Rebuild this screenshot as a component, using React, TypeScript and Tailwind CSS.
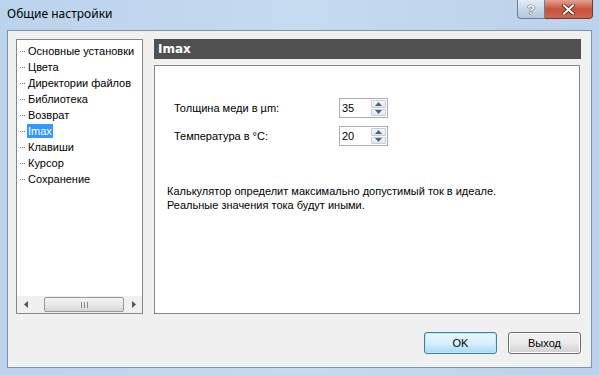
import { useState } from 'react'

const items = [
  'Основные установки',
  'Цвета',
  'Директории файлов',
  'Библиотека',
  'Возврат',
  'Imax',
  'Клавиши',
  'Курсор',
  'Сохранение',
]

function Spin({ value }: { value: string }) {
  return (
    <div className="flex h-[20px] w-[49px] items-stretch border border-[#abadb3] bg-white">
      <div className="flex-1 pl-[2px] text-[11px] leading-[18px] text-black">{value}</div>
      <div className="flex w-[16px] flex-col gap-[1px] py-[1px] pr-[1px]">
        <div className="flex flex-1 items-center justify-center rounded-[1px] border border-[#c5cfdc] bg-gradient-to-b from-[#f6f9fd] to-[#dde6f1]">
          <svg width="7" height="4" viewBox="0 0 7 4">
            <path d="M0 4 L3.5 0 L7 4 Z" fill="#4d6185" />
          </svg>
        </div>
        <div className="flex flex-1 items-center justify-center rounded-[1px] border border-[#c5cfdc] bg-gradient-to-b from-[#f6f9fd] to-[#dde6f1]">
          <svg width="7" height="4" viewBox="0 0 7 4">
            <path d="M0 0 L7 0 L3.5 4 Z" fill="#4d6185" />
          </svg>
        </div>
      </div>
    </div>
  )
}

export default function App() {
  const [selected] = useState(5)

  return (
    <div
      className="flex h-[375px] w-[599px] flex-col overflow-hidden bg-gradient-to-r from-[#bcd3ec] via-[#c6daf0] to-[#bcd2ea] text-black"
      style={{ fontFamily: '"Liberation Sans", Arial, sans-serif' }}
    >
      {/* Title bar */}
      <div className="flex h-[30px] items-start">
        <div className="pl-[7px] pt-[6px] text-[12px] leading-[16px] text-black" style={{ fontFamily: '"Noto Sans", sans-serif' }}>
          Общие настройки
        </div>
        <div className="ml-auto mr-[6px] flex h-[19px]">
          <div className="flex w-[28px] items-center justify-center rounded-bl-[4px] border border-t-0 border-[#6d7f97] bg-gradient-to-b from-[#e4edf7] via-[#c9d7e8] to-[#b5c6dc]">
            <span className="text-[13px] font-bold leading-none text-white [text-shadow:0_0_1px_#334,0_0_1px_#334]">?</span>
          </div>
          <div className="flex w-[48px] items-center justify-center rounded-br-[4px] border border-l-0 border-t-0 border-[#6a3a36] bg-gradient-to-b from-[#e3a093] via-[#c8523f] to-[#d0644c]">
            <svg width="13" height="11" viewBox="0 0 13 11">
              <path d="M2 1.5 L11 9.5 M11 1.5 L2 9.5" stroke="#4a2220" strokeWidth="3.6" strokeLinecap="square" />
              <path d="M2 1.5 L11 9.5 M11 1.5 L2 9.5" stroke="#ffffff" strokeWidth="2" strokeLinecap="square" />
            </svg>
          </div>
        </div>
      </div>

      {/* Client */}
      <div className="mx-[7px] mb-[7px] flex flex-1 flex-col border border-[#7f92ab] bg-[#f0f0f0] px-[8px] pt-[8px]">
        <div className="flex h-[275px] gap-[11px]">
          {/* Tree */}
          <div className="flex w-[127px] flex-col border border-[#828790] bg-white">
            <div className="flex flex-1 flex-col pt-[3px]">
              {items.map((it, i) => (
                <div key={it} className="flex h-[16px] items-center">
                  <span className="ml-[3px] mr-[2px] w-[5px] border-t border-dotted border-[#7a7a7a]" />
                  <span
                    className={
                      i === selected
                        ? 'bg-[#3399ff] px-[1px] text-[11px] leading-[14px] text-white'
                        : 'px-[1px] text-[11px] leading-[14px] text-black'
                    }
                  >
                    {it}
                  </span>
                </div>
              ))}
            </div>
            {/* horizontal scrollbar */}
            <div className="flex h-[17px] items-center bg-[#f0f0f0]">
              <div className="flex w-[17px] items-center justify-center">
                <svg width="4" height="7" viewBox="0 0 4 7">
                  <path d="M4 0 L0 3.5 L4 7 Z" fill="#555" />
                </svg>
              </div>
              <div className="ml-[10px] flex h-[15px] w-[80px] items-center justify-center rounded-[2px] border border-[#979797] bg-gradient-to-b from-[#f3f3f3] via-[#e8e8e8] to-[#d6d6d6]">
                <svg width="7" height="6" viewBox="0 0 7 6">
                  <path d="M0.5 0 V6 M3.5 0 V6 M6.5 0 V6" stroke="#8a8a8a" strokeWidth="1" />
                </svg>
              </div>
              <div className="ml-auto flex w-[17px] items-center justify-center">
                <svg width="4" height="7" viewBox="0 0 4 7">
                  <path d="M0 0 L4 3.5 L0 7 Z" fill="#555" />
                </svg>
              </div>
            </div>
          </div>

          {/* Right panel */}
          <div className="flex w-[427px] flex-col">
            <div className="flex h-[20px] items-center bg-[#505050] pl-[4px]">
              <span className="text-[12px] font-bold text-white" style={{ fontFamily: '"DejaVu Sans", sans-serif' }}>
                Imax
              </span>
            </div>
            <div className="mt-[6px] mr-[1px] flex flex-1 flex-col border border-[#828790] bg-white">
              <div className="mt-[32px] flex flex-col gap-[8px] pl-[19px]">
                <div className="flex items-center">
                  <span className="w-[165px] text-[11px]">Толщина меди в µm:</span>
                  <Spin value="35" />
                </div>
                <div className="flex items-center">
                  <span className="w-[165px] text-[11px]">Температура в °C:</span>
                  <Spin value="20" />
                </div>
              </div>
              <div className="mt-[38px] pl-[12px] text-[11px] leading-[14px]">
                <p>Калькулятор определит максимально допустимый ток в идеале.</p>
                <p>Реальные значения тока будут иными.</p>
              </div>
            </div>
          </div>
        </div>

        {/* Buttons */}
        <div className="mt-[18px] flex justify-end gap-[11px] pr-[2px]">
          <button className="h-[22px] w-[73px] rounded-[3px] border border-[#3c7fb1] bg-gradient-to-b from-[#eaf6fd] via-[#d9f0fc] to-[#a7d9f5] text-[11px] shadow-[inset_0_0_0_1px_#bfe6fb]">
            OK
          </button>
          <button className="h-[22px] w-[73px] rounded-[3px] border border-[#707070] bg-gradient-to-b from-[#f2f2f2] via-[#ebebeb] to-[#cfcfcf] text-[11px] shadow-[inset_0_0_0_1px_#fcfcfc]">
            Выход
          </button>
        </div>
      </div>
    </div>
  )
}
